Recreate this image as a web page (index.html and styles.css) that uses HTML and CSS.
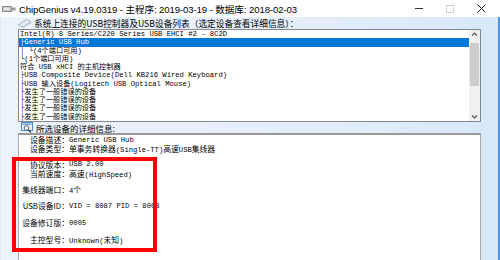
FILE: index.html
```html
<!DOCTYPE html>
<html>
<head>
<meta charset="utf-8">
<link rel="stylesheet" href="styles.css">
</head>
<body>
<div class="window">
  <div class="titlebar">
    <svg class="app-icon" width="14" height="8" viewBox="0 0 14 8">
      <rect x="0.5" y="1.5" width="9" height="5" fill="#c9c9c9" stroke="#8a8a8a"/>
      <rect x="9.5" y="2.5" width="4" height="3" fill="#9a9a9a"/>
      <rect x="2" y="3" width="5" height="2" fill="#e8e8e8"/>
    </svg>
    <span class="title">ChipGenius v4.19.0319 - 主程序: 2019-03-19 - 数据库: 2018-02-03</span>
    <div class="controls">
      <span class="ctl min"></span>
      <span class="ctl max"></span>
      <svg class="ctl close" width="9" height="9" viewBox="0 0 9 9"><path d="M0.5 0.5 L8.5 8.5 M8.5 0.5 L0.5 8.5" stroke="#222" stroke-width="1"/></svg>
    </div>
  </div>
  <div class="client">
    <div class="group-label">
      <svg class="grp-icon" width="15" height="10" viewBox="0 0 15 10">
        <path d="M1 7 L9 1.5 L14 3.5 L6 9 Z" fill="#e9eef3" stroke="#9aaabb" stroke-width="0.8"/>
        <path d="M6 9 L14 3.5 L14 5 L6 10 Z" fill="#b9c6d3"/>
        <path d="M3 6.8 L9 2.8" stroke="#c8d3de" stroke-width="0.8"/>
      </svg>
      <span>系统上连接的USB控制器及USB设备列表（选定设备查看详细信息）：</span>
    </div>
    <div class="listbox">
      <div class="rows">
        <div class="row">Intel(R) 8 Series/C220 Series USB EHCI #2 - 8C2D</div>
        <div class="row selected">├Generic USB Hub</div>
        <div class="row">│ └(4个端口可用)</div>
        <div class="row">└(1个端口可用)</div>
        <div class="row">符合 USB xHCI 的主机控制器</div>
        <div class="row">├USB Composite Device(Dell KB216 Wired Keyboard)</div>
        <div class="row">├USB 输入设备(Logitech USB Optical Mouse)</div>
        <div class="row">├发生了一般错误的设备</div>
        <div class="row">├发生了一般错误的设备</div>
        <div class="row">├发生了一般错误的设备</div>
        <div class="row">├发生了一般错误的设备</div>
      </div>
      <div class="scrollbar">
        <svg class="arrow" width="11" height="9" viewBox="0 0 11 9"><path d="M3 5.5 L5.5 3 L8 5.5" fill="none" stroke="#555" stroke-width="1.2"/></svg>
        <div class="thumb"></div>
        <div class="track"></div>
        <svg class="arrow" width="11" height="9" viewBox="0 0 11 9"><path d="M3 3.5 L5.5 6 L8 3.5" fill="none" stroke="#555" stroke-width="1.2"/></svg>
      </div>
    </div>
    <div class="detail-label">
      <svg class="det-icon" width="13" height="11" viewBox="0 0 13 11">
        <rect x="0.5" y="0.5" width="11" height="8" fill="#e3f0fb" stroke="#4d8ccc"/>
        <rect x="1.5" y="1.5" width="9" height="1.5" fill="#6fa8dc"/>
        <circle cx="5.5" cy="6" r="2.3" fill="#ffffff" stroke="#555" stroke-width="0.9"/>
        <path d="M7.2 7.7 L10 10.5" stroke="#444" stroke-width="1.4"/>
      </svg>
      <span>所选设备的详细信息:</span>
    </div>
    <div class="details">
      <div class="drow r1"><span class="lab">设备描述：</span><span class="val">Generic USB Hub</span></div>
      <div class="drow r2"><span class="lab">设备类型：</span><span class="val"><span class="c">单事务转换器</span>(Single-TT)<span class="c">高速</span>USB<span class="c">集线器</span></span></div>
      <div class="drow r3"><span class="lab">协议版本：</span><span class="val">USB 2.00</span></div>
      <div class="drow r4"><span class="lab">当前速度：</span><span class="val"><span class="c">高速</span>(HighSpeed)</span></div>
      <div class="drow r5"><span class="lab">集线器端口：</span><span class="val">4<span class="c">个</span></span></div>
      <div class="drow r6"><span class="lab">USB设备ID：</span><span class="val">VID = 8087 PID = 8008</span></div>
      <div class="drow r6"><span class="lab">设备修订版：</span><span class="val">0005</span></div>
      <div class="drow r6"><span class="lab">主控型号：</span><span class="val">Unknown(<span class="c">未知</span>)</span></div>
    </div>
  </div>
  <div class="highlight-box"></div>
</div>
</body>
</html>
```

FILE: styles.css
```css
html, body {
  margin: 0;
  padding: 0;
}
body {
  width: 500px;
  height: 260px;
  overflow: hidden;
  background: #ffffff;
}
.window {
  position: relative;
  width: 500px;
  height: 260px;
  display: flex;
  flex-direction: column;
  overflow: hidden;
}
.titlebar {
  height: 17px;
  flex: none;
  display: flex;
  align-items: center;
  background: #ffffff;
  font-family: "Liberation Sans", "Noto Sans CJK SC", sans-serif;
  font-size: 9.6px;
  color: #000;
}
.app-icon {
  margin-left: 2px;
  margin-right: 3px;
  flex: none;
}
.title {
  white-space: nowrap;
  letter-spacing: -0.1px;
}
.controls {
  margin-left: auto;
  display: flex;
  align-items: center;
  height: 17px;
  margin-right: 14px;
}
.ctl {
  display: block;
}
.min {
  width: 8px;
  height: 1px;
  background: #333;
  margin-right: 23px;
}
.max {
  width: 6px;
  height: 6px;
  border: 1px solid #cfcfcf;
  margin-right: 23px;
}
.client {
  flex: 1;
  display: flex;
  flex-direction: column;
  background: linear-gradient(90deg, #edf3fa 0%, #e4eef9 60%, #d8e8f8 100%);
  border-right: 2px solid #4a95e0;
  border-left: 1px solid #e2e8ee;
  min-height: 0;
}
.group-label {
  height: 12px;
  flex: none;
  display: flex;
  align-items: center;
  padding-left: 16px;
  font-family: "Noto Sans CJK SC", sans-serif;
  font-size: 8.7px;
  color: #000;
  white-space: nowrap;
}
.grp-icon {
  margin-right: 2px;
  flex: none;
}
.listbox {
  flex: none;
  margin-left: 17px;
  width: 461px;
  height: 91px;
  border: 1px solid #828790;
  background: #ffffff;
  display: flex;
  overflow: hidden;
}
.rows {
  flex: 1;
  overflow: hidden;
  font-family: "Liberation Mono", "DejaVu Sans Mono", "Noto Sans CJK SC", monospace;
  font-size: 7.2px;
  color: #000;
}
.row {
  height: 8.25px;
  line-height: 8.25px;
  padding-left: 1px;
  white-space: pre;
}
.row.selected {
  background: #0078d7;
  color: #ffffff;
}
.scrollbar {
  width: 11px;
  flex: none;
  background: #f0f0f0;
  display: flex;
  flex-direction: column;
}
.arrow {
  display: block;
  flex: none;
}
.thumb {
  flex: none;
  margin-top: 4px;
  height: 43px;
  margin-left: 1px;
  margin-right: 1px;
  background: #cdcdcd;
}
.track {
  flex: 1;
}
.detail-label {
  height: 11px;
  flex: none;
  display: flex;
  align-items: center;
  padding-left: 20px;
  font-family: "Noto Sans CJK SC", sans-serif;
  font-size: 8.5px;
  color: #000;
  white-space: nowrap;
}
.det-icon {
  margin-right: 2px;
  flex: none;
}
.details {
  flex: 1;
  margin-left: 17px;
  width: 461px;
  background: #ffffff;
  border: 1px solid #a9a9a9;
  border-top: 2px solid #9a9a9a;
  border-bottom: none;
  padding-top: 1px;
  font-family: "Liberation Mono", "DejaVu Sans Mono", "Noto Sans CJK SC", monospace;
  font-size: 7.2px;
  color: #000;
  display: grid;
  grid-template-columns: 50px auto;
  align-content: start;
}
.drow {
  display: contents;
}
.lab {
  text-align: right;
  font-size: 7.8px;
  white-space: nowrap;
  font-family: "Noto Sans CJK SC", "Liberation Mono", monospace;
}
.lab, .val {
  white-space: nowrap;
}
.c {
  font-family: "Noto Sans CJK SC", sans-serif;
  font-size: 7.8px;
}
.r1 .lab, .r1 .val,
.r2 .lab, .r2 .val {
  line-height: 8.5px;
  height: 8.5px;
}
.r3 .lab, .r3 .val {
  margin-top: 6.5px;
  line-height: 9.5px;
  height: 9.5px;
}
.r4 .lab, .r4 .val {
  line-height: 10px;
  height: 10px;
}
.r5 .lab, .r5 .val {
  margin-top: 2.6px;
  line-height: 16.7px;
  height: 16.7px;
}
.r6 .lab, .r6 .val {
  line-height: 16.7px;
  height: 16.7px;
}
.highlight-box {
  position: absolute;
  left: 12px;
  top: 157px;
  width: 145px;
  height: 95px;
  box-sizing: border-box;
  border: 4px solid #ff0000;
}
```
